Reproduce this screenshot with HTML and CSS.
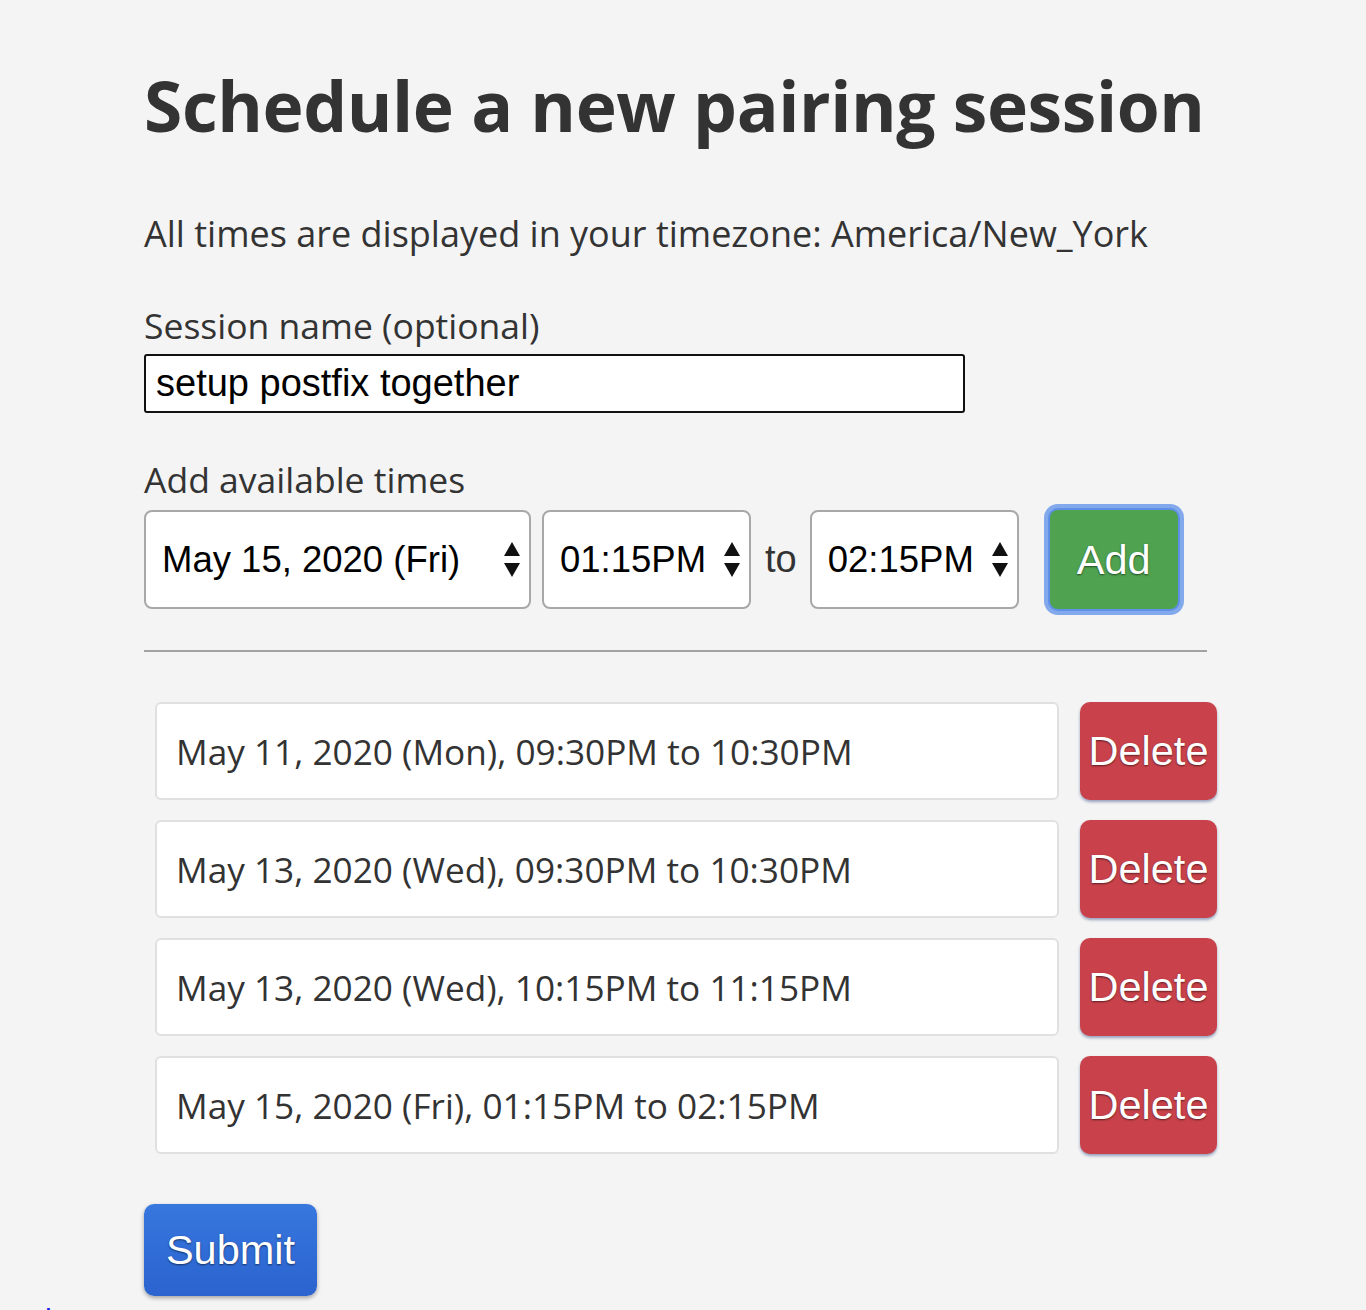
FILE: index.html
```html
<!DOCTYPE html>
<html lang="en">
<head>
<meta charset="utf-8">
<title>Schedule a new pairing session</title>
<link rel="stylesheet" href="styles.css">
</head>
<body>
<main class="page">
  <h1 class="title">Schedule a new pairing session</h1>
  <p class="tz">All times are displayed in your timezone: America/New_York</p>

  <label class="label label-name" for="session-name">Session name (optional)</label>
  <input class="name-input" id="session-name" type="text" value="setup postfix together">

  <div class="label label-times">Add available times</div>
  <div class="time-row">
    <div class="select select-date">
      <select><option>May 15, 2020 (Fri)</option></select>
      <svg class="arrows" width="16" height="36" viewBox="0 0 16 36"><path d="M8 0 L16 14 L0 14 Z M0 21 L16 21 L8 35 Z" fill="#111"/></svg>
    </div>
    <div class="select select-time">
      <select><option>01:15PM</option></select>
      <svg class="arrows" width="16" height="36" viewBox="0 0 16 36"><path d="M8 0 L16 14 L0 14 Z M0 21 L16 21 L8 35 Z" fill="#111"/></svg>
    </div>
    <span class="to">to</span>
    <div class="select select-time">
      <select><option>02:15PM</option></select>
      <svg class="arrows" width="16" height="36" viewBox="0 0 16 36"><path d="M8 0 L16 14 L0 14 Z M0 21 L16 21 L8 35 Z" fill="#111"/></svg>
    </div>
    <button class="btn btn-add" type="button">Add</button>
  </div>

  <hr class="divider">

  <ul class="slots">
    <li class="slot"><div class="slot-text">May 11, 2020 (Mon), 09:30PM to 10:30PM</div><button class="btn btn-delete" type="button">Delete</button></li>
    <li class="slot"><div class="slot-text">May 13, 2020 (Wed), 09:30PM to 10:30PM</div><button class="btn btn-delete" type="button">Delete</button></li>
    <li class="slot"><div class="slot-text">May 13, 2020 (Wed), 10:15PM to 11:15PM</div><button class="btn btn-delete" type="button">Delete</button></li>
    <li class="slot"><div class="slot-text">May 15, 2020 (Fri), 01:15PM to 02:15PM</div><button class="btn btn-delete" type="button">Delete</button></li>
  </ul>

  <button class="btn btn-submit" type="submit">Submit</button>
</main>
<a class="home-link" href="#">home</a>
</body>
</html>
```

FILE: styles.css
```css
html, body {
  margin: 0;
  padding: 0;
  background: #f4f4f4;
}

body {
  font-family: "Open Sans", "Noto Sans", sans-serif;
  color: #333;
  position: relative;
  min-height: 1310px;
}

.page {
  padding: 60px 0 0 144px;
  width: 1063px;
}

.title {
  margin: 0;
  font-size: 69.5px;
  line-height: 91px;
  font-weight: 700;
  letter-spacing: -0.4px;
  white-space: nowrap;
}

.tz {
  margin: 59px 0 0;
  font-size: 36px;
  line-height: 48px;
}

.label {
  display: block;
  font-size: 35.5px;
  line-height: 48px;
}

.label-name {
  margin-top: 43px;
}

.name-input {
  display: block;
  box-sizing: border-box;
  width: 821px;
  height: 59px;
  margin: 5px 0 0;
  padding: 0 10px;
  border: 2px solid #111;
  border-radius: 3px;
  background: #fff;
  font-family: "Liberation Sans", Arial, sans-serif;
  font-size: 38px;
  color: #000;
  outline: none;
}

.label-times {
  margin-top: 42px;
}

.time-row {
  display: flex;
  align-items: center;
  margin-top: 7px;
}

.select {
  box-sizing: border-box;
  height: 99px;
  display: flex;
  align-items: center;
  border: 2px solid #a8a8a8;
  border-radius: 8px;
  background: #fff;
  padding-right: 9px;
}

.select select {
  flex: 1;
  min-width: 0;
  -webkit-appearance: none;
  appearance: none;
  border: 0;
  background: transparent;
  font-family: "Liberation Sans", Arial, sans-serif;
  font-size: 36.5px;
  color: #000;
  padding: 0 0 0 16px;
  height: 100%;
  outline: none;
}

.arrows {
  flex: none;
}

.select-date {
  width: 387px;
  margin-right: 11px;
}

.select-time {
  width: 209px;
}

.to {
  font-family: "Liberation Sans", Arial, sans-serif;
  font-size: 38px;
  color: #333;
  margin: 0 13px 0 14px;
}

.btn {
  border: 0;
  color: #fff;
  font-family: "Liberation Sans", Arial, sans-serif;
  font-size: 41.5px;
  cursor: pointer;
  padding: 0;
  text-shadow: 0 1px 2px rgba(0, 0, 0, 0.55);
}

.btn-add {
  flex: none;
  width: 128px;
  height: 99px;
  margin-left: 31px;
  background: #4fa24f;
  border-radius: 8px;
  box-shadow: 0 0 0 2px #5f8fe6, 0 0 0 6px rgba(110, 155, 235, 0.85);
}

.divider {
  margin: 41px 0 0;
  border: 0;
  height: 2px;
  background: #a2a2a2;
}

.slots {
  list-style: none;
  margin: 50px 0 0;
  padding: 0 0 0 11px;
  display: flex;
  flex-direction: column;
  gap: 20px;
}

.slot {
  display: flex;
  align-items: stretch;
  gap: 21px;
}

.slot-text {
  flex: none;
  box-sizing: border-box;
  width: 904px;
  height: 98px;
  display: flex;
  align-items: center;
  padding-left: 19px;
  background: #fff;
  border: 2px solid #e0e0e0;
  border-radius: 6px;
  font-size: 35.2px;
  color: #333;
}

.btn-delete {
  flex: none;
  width: 137px;
  height: 98px;
  background: #c9424b;
  border-radius: 10px;
  box-shadow: 0 2px 3px rgba(40, 60, 120, 0.45);
}

.btn-submit {
  display: block;
  margin-top: 50px;
  width: 173px;
  height: 92px;
  border-radius: 10px;
  background: linear-gradient(#3777de, #2b63cf);
  box-shadow: 0 2px 4px rgba(0, 0, 0, 0.35);
}

.home-link {
  position: absolute;
  left: 45px;
  top: 1305px;
  font-family: "Liberation Sans", Arial, sans-serif;
  font-size: 30px;
  line-height: 1;
  color: #1a1aee;
}
```
